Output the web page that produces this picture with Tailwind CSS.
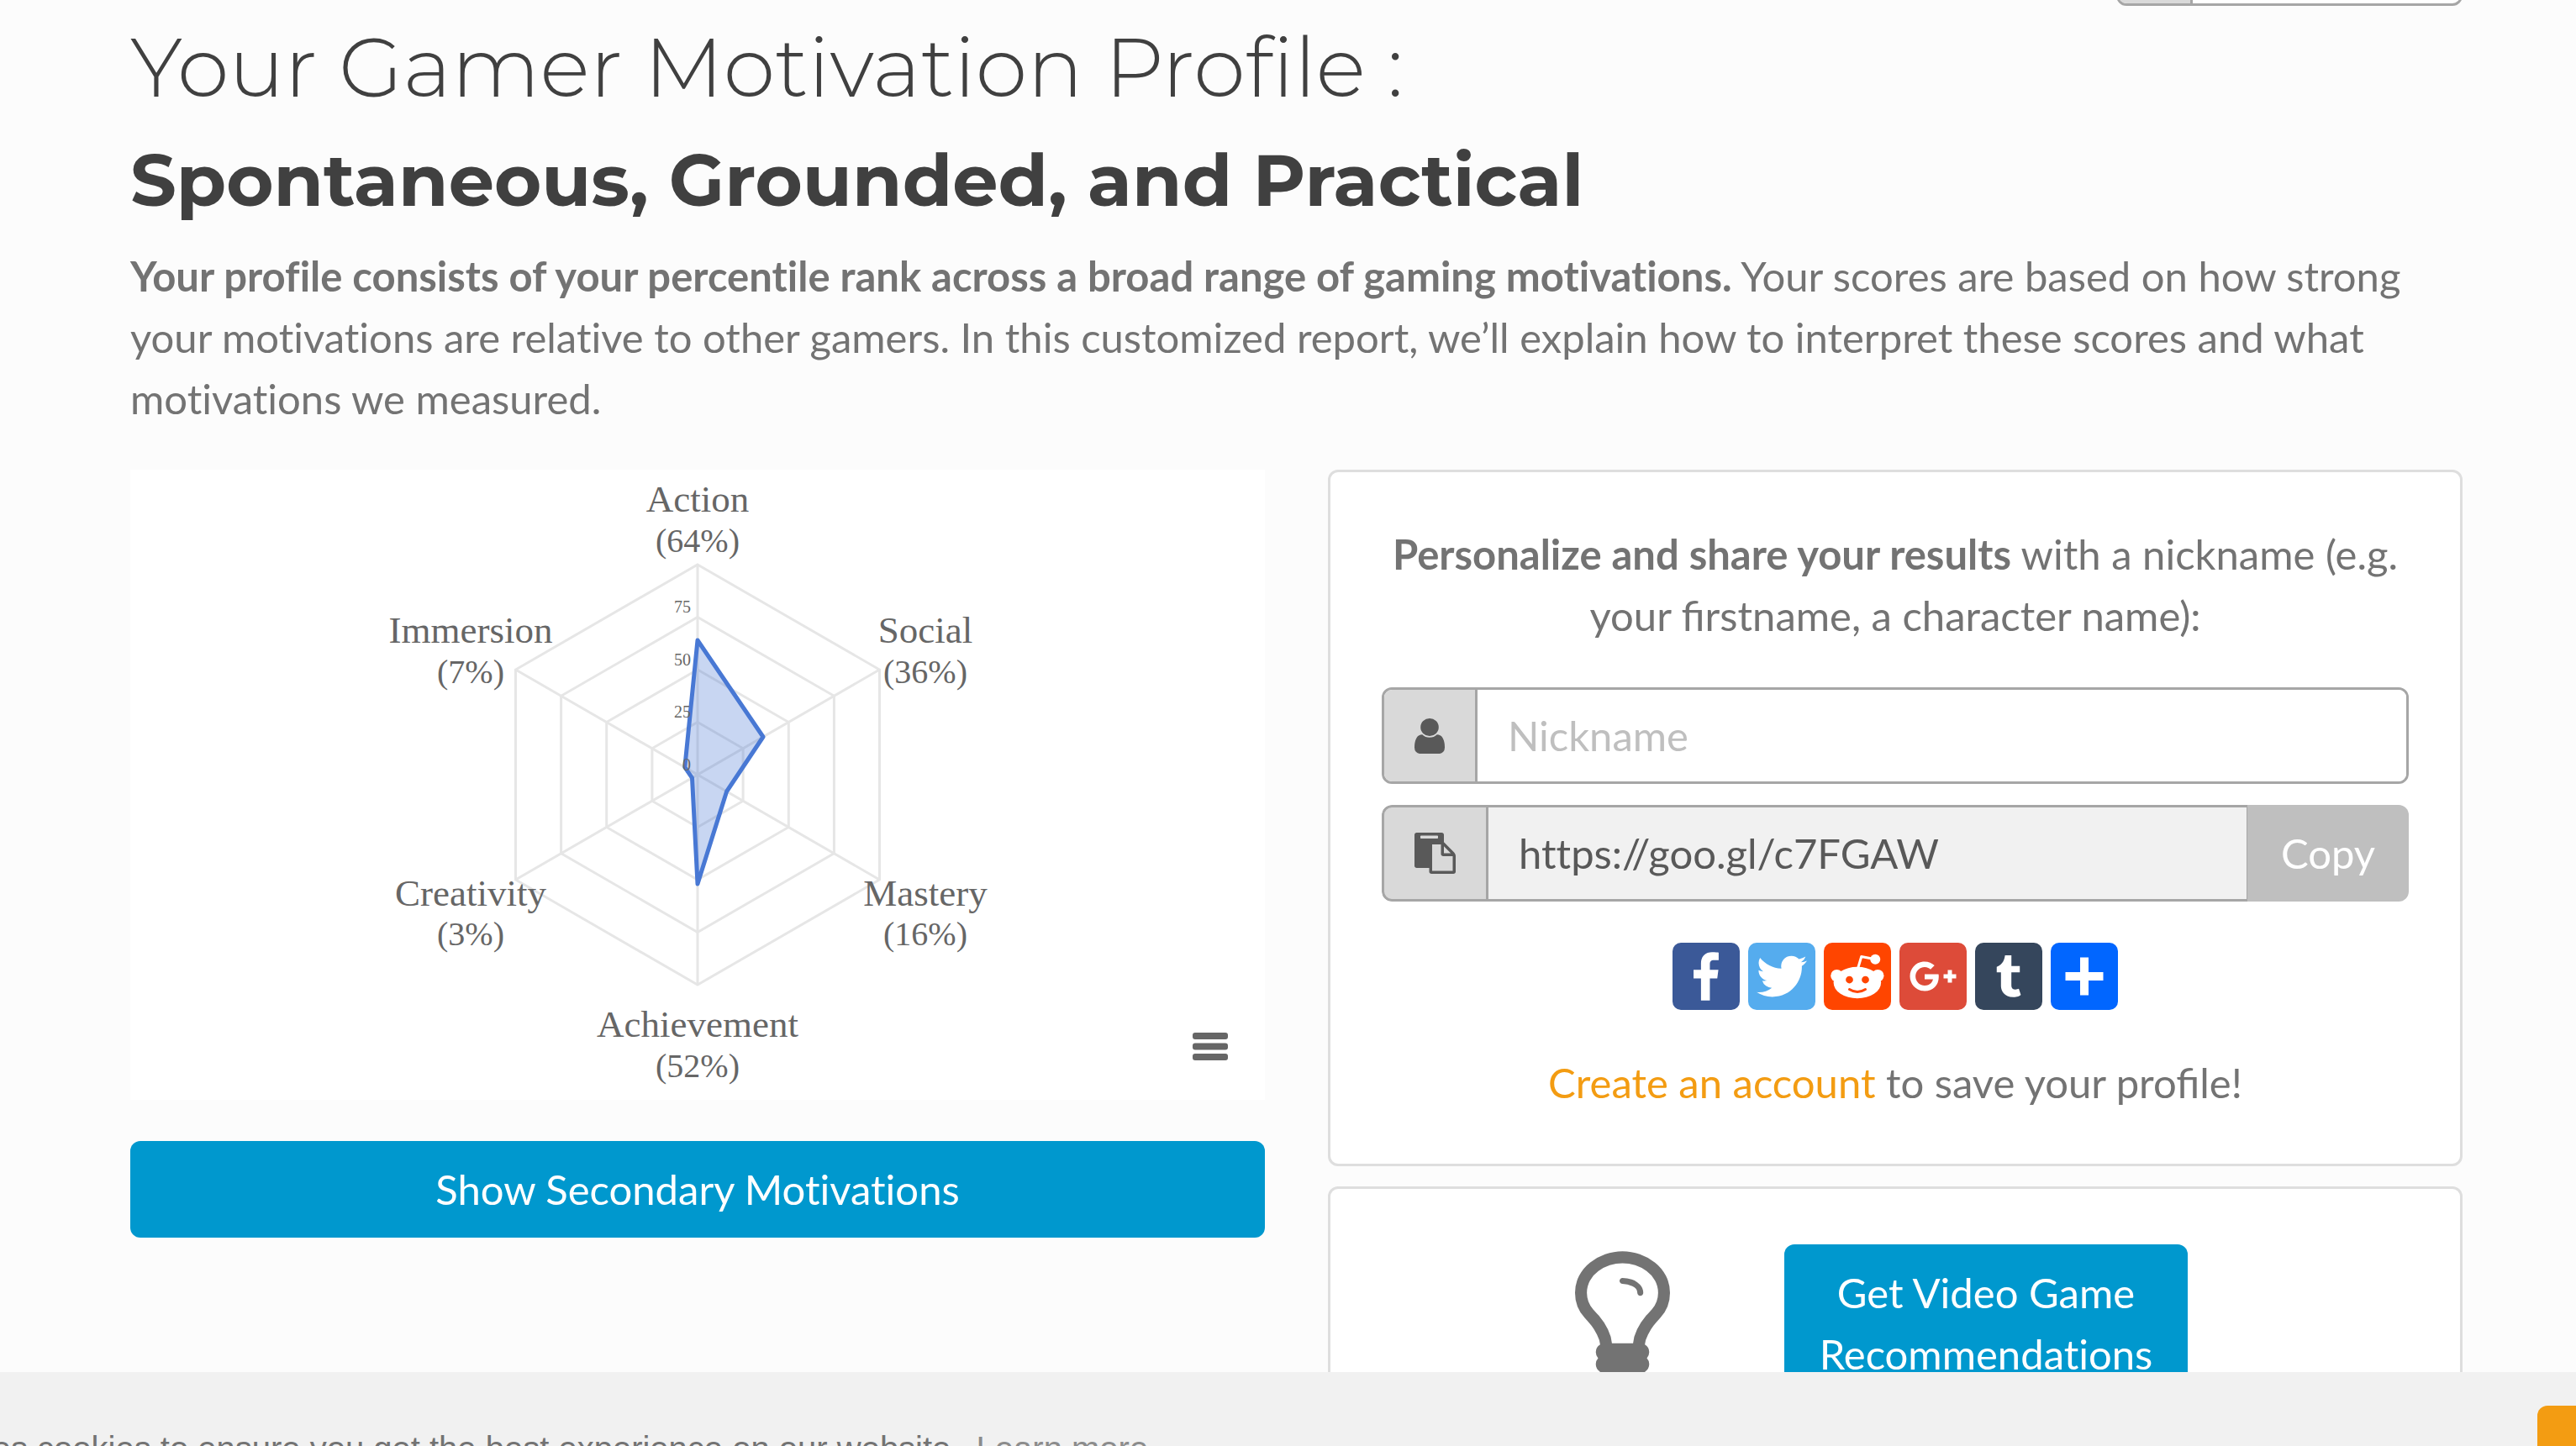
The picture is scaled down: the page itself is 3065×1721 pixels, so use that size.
<!DOCTYPE html>
<html lang="en">
<head>
<meta charset="utf-8">
<title>Gamer Motivation Profile</title>
<script src="https://cdn.jsdelivr.net/npm/@tailwindcss/browser@4"></script>
</head>
<body class="h-screen overflow-hidden bg-[#fcfcfc] font-['Lato',sans-serif] text-[49px] leading-[73px] text-[#737373]">
<div class="pl-[155px] pr-[135px]">
  <!-- Search field, scrolled almost out of view -->
  <header class="flex h-[7px] items-end justify-end overflow-hidden">
    <label class="flex h-[115px] w-[412px] shrink-0 overflow-hidden rounded-[12px] border-[3px] border-[#a6a6a6] bg-white">
      <span class="w-[88px] shrink-0 border-r-[3px] border-[#a6a6a6] bg-[#d9d9d9]"></span>
      <input type="search" aria-label="Search" class="min-w-0 flex-1 px-9 outline-none">
    </label>
  </header>

  <main>
    <h1 class="pt-[13px] font-['Montserrat','Open_Sans',sans-serif] text-[99px] leading-[120px] font-light whitespace-nowrap text-[#404040] [font-variant-ligatures:none]">Your Gamer Motivation Profile :</h1>
    <h2 class="pt-[21px] font-['Montserrat','Open_Sans',sans-serif] text-[86px] leading-[108px] font-bold whitespace-nowrap text-[#404040]">Spontaneous, Grounded, and Practical</h2>
    <p class="mt-[23px] [font-variant-ligatures:none]"><strong>Your profile consists of your percentile rank across a broad range of gaming motivations.</strong> Your scores are based on how strong your motivations are relative to other gamers. In this customized report, we’ll explain how to interpret these scores and what motivations we measured.</p>

    <div class="mt-12 grid grid-cols-2 items-start gap-x-[75px]">
      <section class="grid gap-[49px]">
        <div class="relative bg-white">
          <svg viewBox="0 0 1350 750" class="block w-full font-['Liberation_Serif',serif]" fill="none" role="img" aria-label="Primary motivations chart">
            <g stroke="#e6e6e6" stroke-width="3">
              <path d="M675 113 891.500 238V488L675 613 458.500 488V238Z"/>
              <path d="M675 175.500 837.400 269.300V456.700L675 550.500 512.600 456.700V269.300Z"/>
              <path d="M675 238 783.300 300.500V425.500L675 488 566.700 425.500V300.500Z"/>
              <path d="M675 300.500 729.100 331.800V394.200L675 425.500 620.900 394.200V331.800Z"/>
              <path d="M675 113V613M891.500 238 458.500 488M891.500 488 458.500 238"/>
            </g>
            <path d="M675 203 753 318 709.600 383 675 493 668.500 366.800 659.800 354.200Z" fill="#4878d4" fill-opacity=".3" stroke="#4878d4" stroke-width="5" stroke-linejoin="round"/>
            <g fill="#666" font-size="20" text-anchor="end">
              <text x="667" y="170">75</text><text x="667" y="233">50</text><text x="667" y="295">25</text><text x="667" y="358">0</text>
            </g>
            <g fill="#666" font-size="45" text-anchor="middle">
              <text x="675" y="50">Action</text><text x="946" y="206">Social</text><text x="946" y="519">Mastery</text>
              <text x="675" y="675">Achievement</text><text x="405" y="519">Creativity</text><text x="405" y="206">Immersion</text>
            </g>
            <g fill="#666" font-size="40" text-anchor="middle">
              <text x="675" y="98">(64%)</text><text x="946" y="254">(36%)</text><text x="946" y="566">(16%)</text>
              <text x="675" y="723">(52%)</text><text x="405" y="566">(3%)</text><text x="405" y="254">(7%)</text>
            </g>
          </svg>
          <button type="button" aria-label="Chart menu" class="absolute right-[44px] bottom-[47px]">
            <svg width="42" height="33" viewBox="0 0 42 33" class="block" fill="#666"><rect width="42" height="8" rx="3"/><rect y="12.500" width="42" height="8" rx="3"/><rect y="25" width="42" height="8" rx="3"/></svg>
          </button>
        </div>
        <button type="button" class="rounded-[12px] bg-[#0098ce] py-[21px] text-white [font-variant-ligatures:none]">Show Secondary Motivations</button>
      </section>

      <section class="grid gap-6">
        <div class="rounded-[12px] border-[3px] border-[#dedede] bg-white px-[61px] pt-[61px] pb-[60px] text-center">
          <p><strong>Personalize and share your results</strong> with a nickname (e.g. your firstname, a character name):</p>
          <div class="mt-[49px] flex h-[115px] overflow-hidden rounded-[12px] border-[3px] border-[#a6a6a6]">
            <label for="nickname" class="flex items-center border-r-[3px] border-[#a6a6a6] bg-[#d9d9d9] px-9">
              <svg width="36" height="42" viewBox="256 128 1280 1536" preserveAspectRatio="none" fill="#595959" aria-label="Nickname"><path d="M1536 1399q0 109-62.500 187t-150.500 78h-854q-88 0-150.500-78t-62.500-187q0-85 8.500-160.500t31.500-152 58.500-131 94-89 134.500-34.500q131 128 313 128t313-128q76 0 134.500 34.500t94 89 58.500 131 31.500 152 8.500 160.500zm-256-887q0 159-112.500 271.500t-271.500 112.500-271.500-112.500-112.500-271.500 112.500-271.500 271.500-112.500 271.500 112.500 112.500 271.500z"/></svg>
            </label>
            <input id="nickname" type="text" placeholder="Nickname" class="min-w-0 flex-1 bg-white px-9 text-[#595959] outline-none placeholder:text-[#bfbfbf]">
          </div>
          <div class="mt-[25px] flex h-[115px] overflow-hidden rounded-[12px]">
            <label for="link" class="flex items-center rounded-l-[12px] border-[3px] border-[#a6a6a6] bg-[#d9d9d9] px-9">
              <svg width="49" height="49" viewBox="0 0 1792 1792" fill="#595959" aria-label="Link"><path d="M768 1664h896v-640h-416q-40 0-68-28t-28-68v-416h-384v1152zm256-1440v-64q0-13-9.500-22.500t-22.500-9.500h-704q-13 0-22.500 9.500t-9.500 22.500v64q0 13 9.500 22.500t22.500 9.500h704q13 0 22.500-9.500t9.500-22.500zm256 672h299l-299-299v299zm512 128v672q0 40-28 68t-68 28h-960q-40 0-68-28t-28-68v-160h-544q-40 0-68-28t-28-68v-1344q0-40 28-68t68-28h1088q40 0 68 28t28 68v328q21 13 36 28l408 408q28 28 48 76t20 88z"/></svg>
            </label>
            <input id="link" type="text" readonly value="https://goo.gl/c7FGAW" class="min-w-0 flex-1 border-y-[3px] border-r border-[#a6a6a6] bg-[#f1f1f1] px-9 text-[#595959] outline-none [font-variant-ligatures:none]">
            <button type="button" class="w-[192px] shrink-0 bg-[#bfbfbf] text-white">Copy</button>
          </div>
          <div class="mt-[49px] flex justify-center gap-[10px]">
            <a href="#facebook" aria-label="Facebook"><svg viewBox="0 0 32 32" class="size-20 rounded-[10px] bg-[#3b5998]" fill="#fff"><path d="M17.780 27.500V17.008h3.522l.527-4.090h-4.050v-2.610c0-1.182.33-1.990 2.023-1.990h2.166V4.660c-.375-.05-1.660-.16-3.155-.16-3.123 0-5.260 1.905-5.260 5.405v3.016h-3.530v4.090h3.530V27.500h4.223z"/></svg></a>
            <a href="#twitter" aria-label="Twitter"><svg viewBox="0 0 32 32" class="size-20 rounded-[10px] bg-[#55acee]" fill="#fff"><path d="M28 8.557a9.913 9.913 0 0 1-2.828.775 4.930 4.930 0 0 0 2.166-2.725 9.738 9.738 0 0 1-3.130 1.194 4.920 4.920 0 0 0-3.593-1.550 4.924 4.924 0 0 0-4.794 6.049c-4.090-.21-7.720-2.170-10.150-5.150a4.942 4.942 0 0 0-.665 2.477c0 1.710.87 3.214 2.190 4.100a4.968 4.968 0 0 1-2.230-.616v.06c0 2.390 1.700 4.380 3.952 4.830-.414.115-.85.174-1.297.174-.318 0-.626-.03-.928-.086a4.935 4.935 0 0 0 4.600 3.420 9.893 9.893 0 0 1-6.114 2.107c-.398 0-.79-.023-1.175-.068a13.953 13.953 0 0 0 7.550 2.213c9.056 0 14.010-7.507 14.010-14.013 0-.213-.005-.426-.015-.637.96-.695 1.795-1.560 2.455-2.550z"/></svg></a>
            <a href="#reddit" aria-label="Reddit"><svg viewBox="0 0 32 32" class="size-20 rounded-[10px] bg-[#ff4500]" fill="#fff"><circle cx="6.200" cy="15.700" r="2.900"/><circle cx="25.700" cy="15.700" r="2.900"/><ellipse cx="15.950" cy="19" rx="11.300" ry="7.500"/><path d="M16.300 12 17.900 6.600 23 7.600" fill="none" stroke="#fff" stroke-width="1.200" stroke-linejoin="round"/><circle cx="24.500" cy="7.900" r="2.400"/><g fill="#ff4500"><circle cx="12.200" cy="17.600" r="1.750"/><circle cx="19.800" cy="17.600" r="1.750"/></g><path d="M12.200 22.200q3.800 2.400 7.600 0" fill="none" stroke="#ff4500" stroke-width="1.200" stroke-linecap="round"/></svg></a>
            <a href="#google-plus" aria-label="Google Plus"><svg viewBox="0 0 32 32" class="size-20 rounded-[10px] bg-[#dd4b39]" fill="#fff"><path d="M27 15h-2v-2h-2v2h-2v2h2v2h2v-2h2m-15-2v2.400h3.970c-.16 1.030-1.200 3.020-3.970 3.020-2.390 0-4.340-1.980-4.340-4.420s1.950-4.420 4.340-4.420c1.360 0 2.270.58 2.790 1.080l1.900-1.830C15.470 9.690 13.890 9 12 9c-3.870 0-7 3.130-7 7s3.130 7 7 7c4.040 0 6.720-2.840 6.720-6.840 0-.46-.05-.81-.11-1.160H12z"/></svg></a>
            <a href="#tumblr" aria-label="Tumblr"><svg viewBox="0 0 32 32" class="size-20 rounded-[10px] bg-[#35465c]" fill="#fff"><path transform="translate(2.200 .85) scale(.95)" d="M19.590 22.176c-.392.186-1.140.348-1.695.362-1.682.045-2.008-1.180-2.022-2.070V13.930h4.218v-3.180H15.890V5.403h-3.076c-.05 0-.138.044-.15.157-.18 1.636-.947 4.510-4.133 5.660v2.710h2.124v6.862c0 2.350 1.733 5.688 6.308 5.610 1.544-.028 3.258-.674 3.637-1.230l-1.010-2.996"/></svg></a>
            <a href="#share" aria-label="Share"><svg viewBox="0 0 32 32" class="size-20 rounded-[10px] bg-[#0166ff]" fill="#fff"><path d="M14 7h4v18h-4zM7 14h18v4H7z"/></svg></a>
          </div>
          <p class="mt-[50px]"><a href="#signup" class="text-[#f39c12]">Create an account</a> to save your profile!</p>
        </div>

        <div class="flex items-start justify-center gap-[136px] rounded-[12px] border-[3px] border-[#dedede] bg-white pt-[66px] pr-[33px] pb-[60px]">
          <svg width="113" height="170" viewBox="384 192 1024 1536" class="mt-2" fill="#737373" aria-hidden="true"><path d="M1120 640q0 13-9.500 22.500t-22.500 9.500-22.500-9.500-9.500-22.500q0-46-54-71t-106-25q-13 0-22.500-9.500t-9.500-22.500 9.500-22.500 22.500-9.500q50 0 99.500 16t87 54 37.500 90zm160 0q0-72-34.500-134t-90-101.500-123-62-136.500-22.500-136.500 22.500-123 62-90 101.500-34.500 134q0 101 68 180 10 11 30.500 33t30.500 33q128 153 141 298h228q13-145 141-298 10-11 30.500-33t30.500-33q68-79 68-180zm128 0q0 155-103 268-45 49-74.500 87t-59.500 95.500-34 107.500q47 28 47 82 0 37-25 64 25 27 25 64 0 52-45 81 13 23 13 47 0 46-31.500 71t-77.500 25q-20 44-60 70t-87 26-87-26-60-70q-46 0-77.500-25t-31.500-71q0-24 13-47-45-29-45-81 0-37 25-64-25-27-25-64 0-54 47-82-4-50-34-107.500t-59.500-95.500-74.500-87q-103-113-103-268 0-99 44.500-184.500t117-142 164-89 186.500-32.500 186.500 32.500 164 89 117 142 44.500 184.500z"/></svg>
          <button type="button" class="w-[480px] rounded-[12px] bg-[#0098ce] py-[21px] text-white [font-variant-ligatures:none]">Get Video Game<br>Recommendations</button>
        </div>
      </section>
    </div>
  </main>
</div>

<!-- Cookie notice -->
<aside class="fixed inset-x-0 bottom-0 flex h-[88px] items-start justify-between overflow-hidden bg-[#f1f1f1] pt-10 font-['Liberation_Sans',sans-serif] text-[40px]">
  <p class="-ml-[285px] shrink-0 pt-[15px] whitespace-nowrap">This website uses cookies to ensure you get the best experience on our website. <a href="#cookies" class="ml-2 opacity-80">Learn more</a></p>
  <button type="button" aria-label="Accept cookies" class="-mr-[274px] h-[110px] w-80 shrink-0 rounded-[12px] bg-[#f39c12]"></button>
</aside>
</body>
</html>
